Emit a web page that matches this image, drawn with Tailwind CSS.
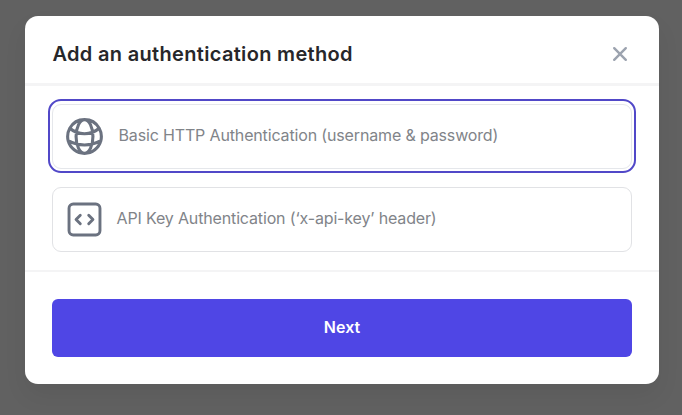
<!DOCTYPE html>
<html lang="en">
<head>
<meta charset="utf-8">
<title>Add an authentication method</title>
<script src="https://cdn.jsdelivr.net/npm/@tailwindcss/browser@4"></script>
</head>
<body class="h-[415px] overflow-hidden bg-[#616161] px-[25px] pt-4 font-['Inter',sans-serif] antialiased">
<div class="flex h-[368px] w-[634px] flex-col rounded-[13px] bg-white shadow-[0_12px_24px_rgba(0,0,0,0.06)]">
  <header class="flex h-[70px] shrink-0 items-center justify-between border-b-3 border-[#f4f4f5] pt-[9px] pr-[31px] pl-[27.5px]">
    <h1 class="text-[20px] leading-7 font-semibold tracking-[0.32px] whitespace-nowrap text-[#27272a]">Add an authentication method</h1>
    <button aria-label="Close" class="text-[#9ca3af]">
      <svg class="size-4" viewBox="0 0 16 16" fill="none" stroke="currentColor" stroke-width="2.4" stroke-linecap="round"><path d="M2.2 2.2 13.8 13.8M13.8 2.2 2.2 13.8"/></svg>
    </button>
  </header>
  <main class="flex h-[186px] shrink-0 flex-col gap-[18px] border-b-2 border-[#f4f4f5] px-[27px] pt-[18px]">
    <button class="relative flex h-[65px] shrink-0 items-center rounded-[9px] border border-[#e5e7eb] pl-[9px] text-[#6b7280] before:absolute before:-inset-x-[5px] before:-top-[6px] before:-bottom-[5px] before:rounded-[13px] before:border-2 before:border-[#5148c8]">
      <svg class="size-[45px]" viewBox="0 0 24 24" fill="none" stroke="currentColor" stroke-width="1.65" stroke-linecap="round" stroke-linejoin="round"><path d="M12 21a9.004 9.004 0 0 0 8.716-6.747M12 21a9.004 9.004 0 0 1-8.716-6.747M12 21c2.485 0 4.5-4.03 4.5-9S14.485 3 12 3m0 18c-2.485 0-4.5-4.03-4.5-9S9.515 3 12 3m0 0a8.997 8.997 0 0 1 7.843 4.582M12 3a8.997 8.997 0 0 0-7.843 4.582m15.686 0A11.953 11.953 0 0 1 12 10.5c-2.998 0-5.74-1.1-7.843-2.918m15.686 0A8.959 8.959 0 0 1 21 12c0 .778-.099 1.533-.284 2.253m0 0A17.919 17.919 0 0 1 12 16.5c-3.162 0-6.133-.815-8.716-2.247m0 0A9.015 9.015 0 0 1 3 12c0-1.605.42-3.113 1.157-4.418"/></svg>
      <span class="ml-[11.5px] pb-[3px] text-[16px] leading-6 tracking-[-0.15px] whitespace-nowrap text-[#818489]">Basic HTTP Authentication (username &amp; password)</span>
    </button>
    <button class="flex h-[65px] shrink-0 items-center rounded-[9px] border border-[#e1e2e5] pl-[9px] text-[#6b7280]">
      <svg class="size-[45px]" viewBox="0 0 24 24" fill="none" stroke="currentColor" stroke-width="1.55" stroke-linecap="round" stroke-linejoin="round"><path d="M14.25 9.75 16.5 12l-2.25 2.25m-4.5 0L7.5 12l2.25-2.25M6 20.25h12A2.25 2.25 0 0 0 20.25 18V6A2.25 2.25 0 0 0 18 3.75H6A2.25 2.25 0 0 0 3.75 6v12A2.25 2.25 0 0 0 6 20.25Z"/></svg>
      <span class="ml-[9.5px] pb-[3px] text-[16px] leading-6 tracking-[-0.15px] whitespace-nowrap text-[#818489]">API Key Authentication (‘x-api-key’ header)</span>
    </button>
  </main>
  <footer class="px-[27px] pt-[27px]">
    <button class="flex h-[58px] w-full items-center justify-center rounded-[6px] bg-[#4f46e5] pb-[2px] text-[16px] font-semibold text-white">Next</button>
  </footer>
</div>
</body>
</html>
